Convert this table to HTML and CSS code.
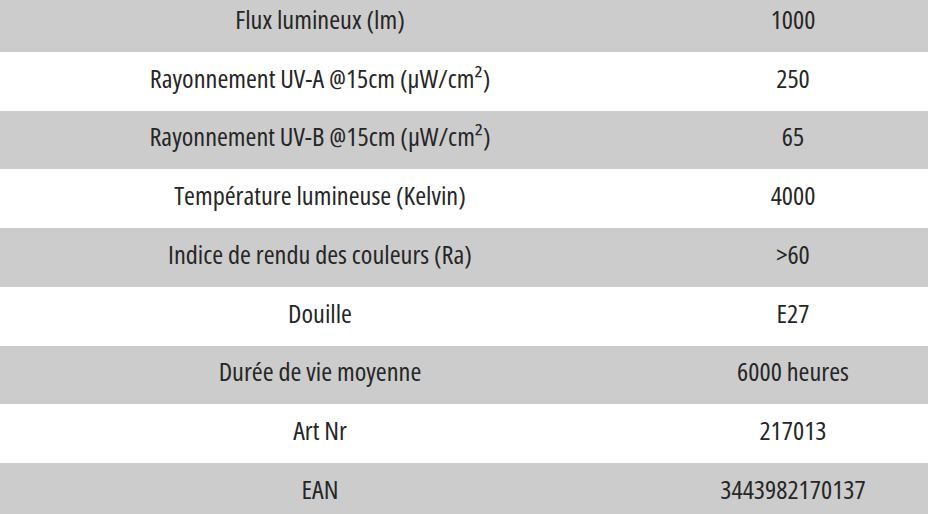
FILE: index.html
```html
<!DOCTYPE html>
<html lang="fr">
<head>
<meta charset="utf-8">
<title>Caractéristiques</title>
<link rel="stylesheet" href="styles.css">
</head>
<body>
<div class="specs">
  <div class="row shaded"><div class="label">Flux lumineux (lm)</div><div class="value">1000</div></div>
  <div class="row"><div class="label">Rayonnement UV-A @15cm (µW/cm²)</div><div class="value">250</div></div>
  <div class="row shaded"><div class="label">Rayonnement UV-B @15cm (µW/cm²)</div><div class="value">65</div></div>
  <div class="row"><div class="label">Température lumineuse (Kelvin)</div><div class="value">4000</div></div>
  <div class="row shaded"><div class="label">Indice de rendu des couleurs (Ra)</div><div class="value">&gt;60</div></div>
  <div class="row"><div class="label">Douille</div><div class="value">E27</div></div>
  <div class="row shaded"><div class="label">Durée de vie moyenne</div><div class="value">6000 heures</div></div>
  <div class="row"><div class="label">Art Nr</div><div class="value">217013</div></div>
  <div class="row shaded"><div class="label">EAN</div><div class="value">3443982170137</div></div>
</div>
</body>
</html>
```

FILE: styles.css
```css
html, body {
  margin: 0;
  padding: 0;
  background: #ffffff;
  overflow: hidden;
}

.specs {
  width: 946px;
  margin-top: -7px;
  display: flex;
  flex-direction: column;
  font-family: "Open Sans", "DejaVu Sans Condensed", sans-serif;
  font-stretch: 75%;
  font-weight: 500;
  font-size: 26.3px;
  color: #262626;
}

.row {
  box-sizing: border-box;
  height: 58.75px;
  padding-bottom: 7px;
  display: grid;
  grid-template-columns: 640px 306px;
  align-items: center;
  background: #ffffff;
}

.row.shaded {
  background: #cccccc;
}

.label,
.value {
  text-align: center;
  white-space: nowrap;
}
```
